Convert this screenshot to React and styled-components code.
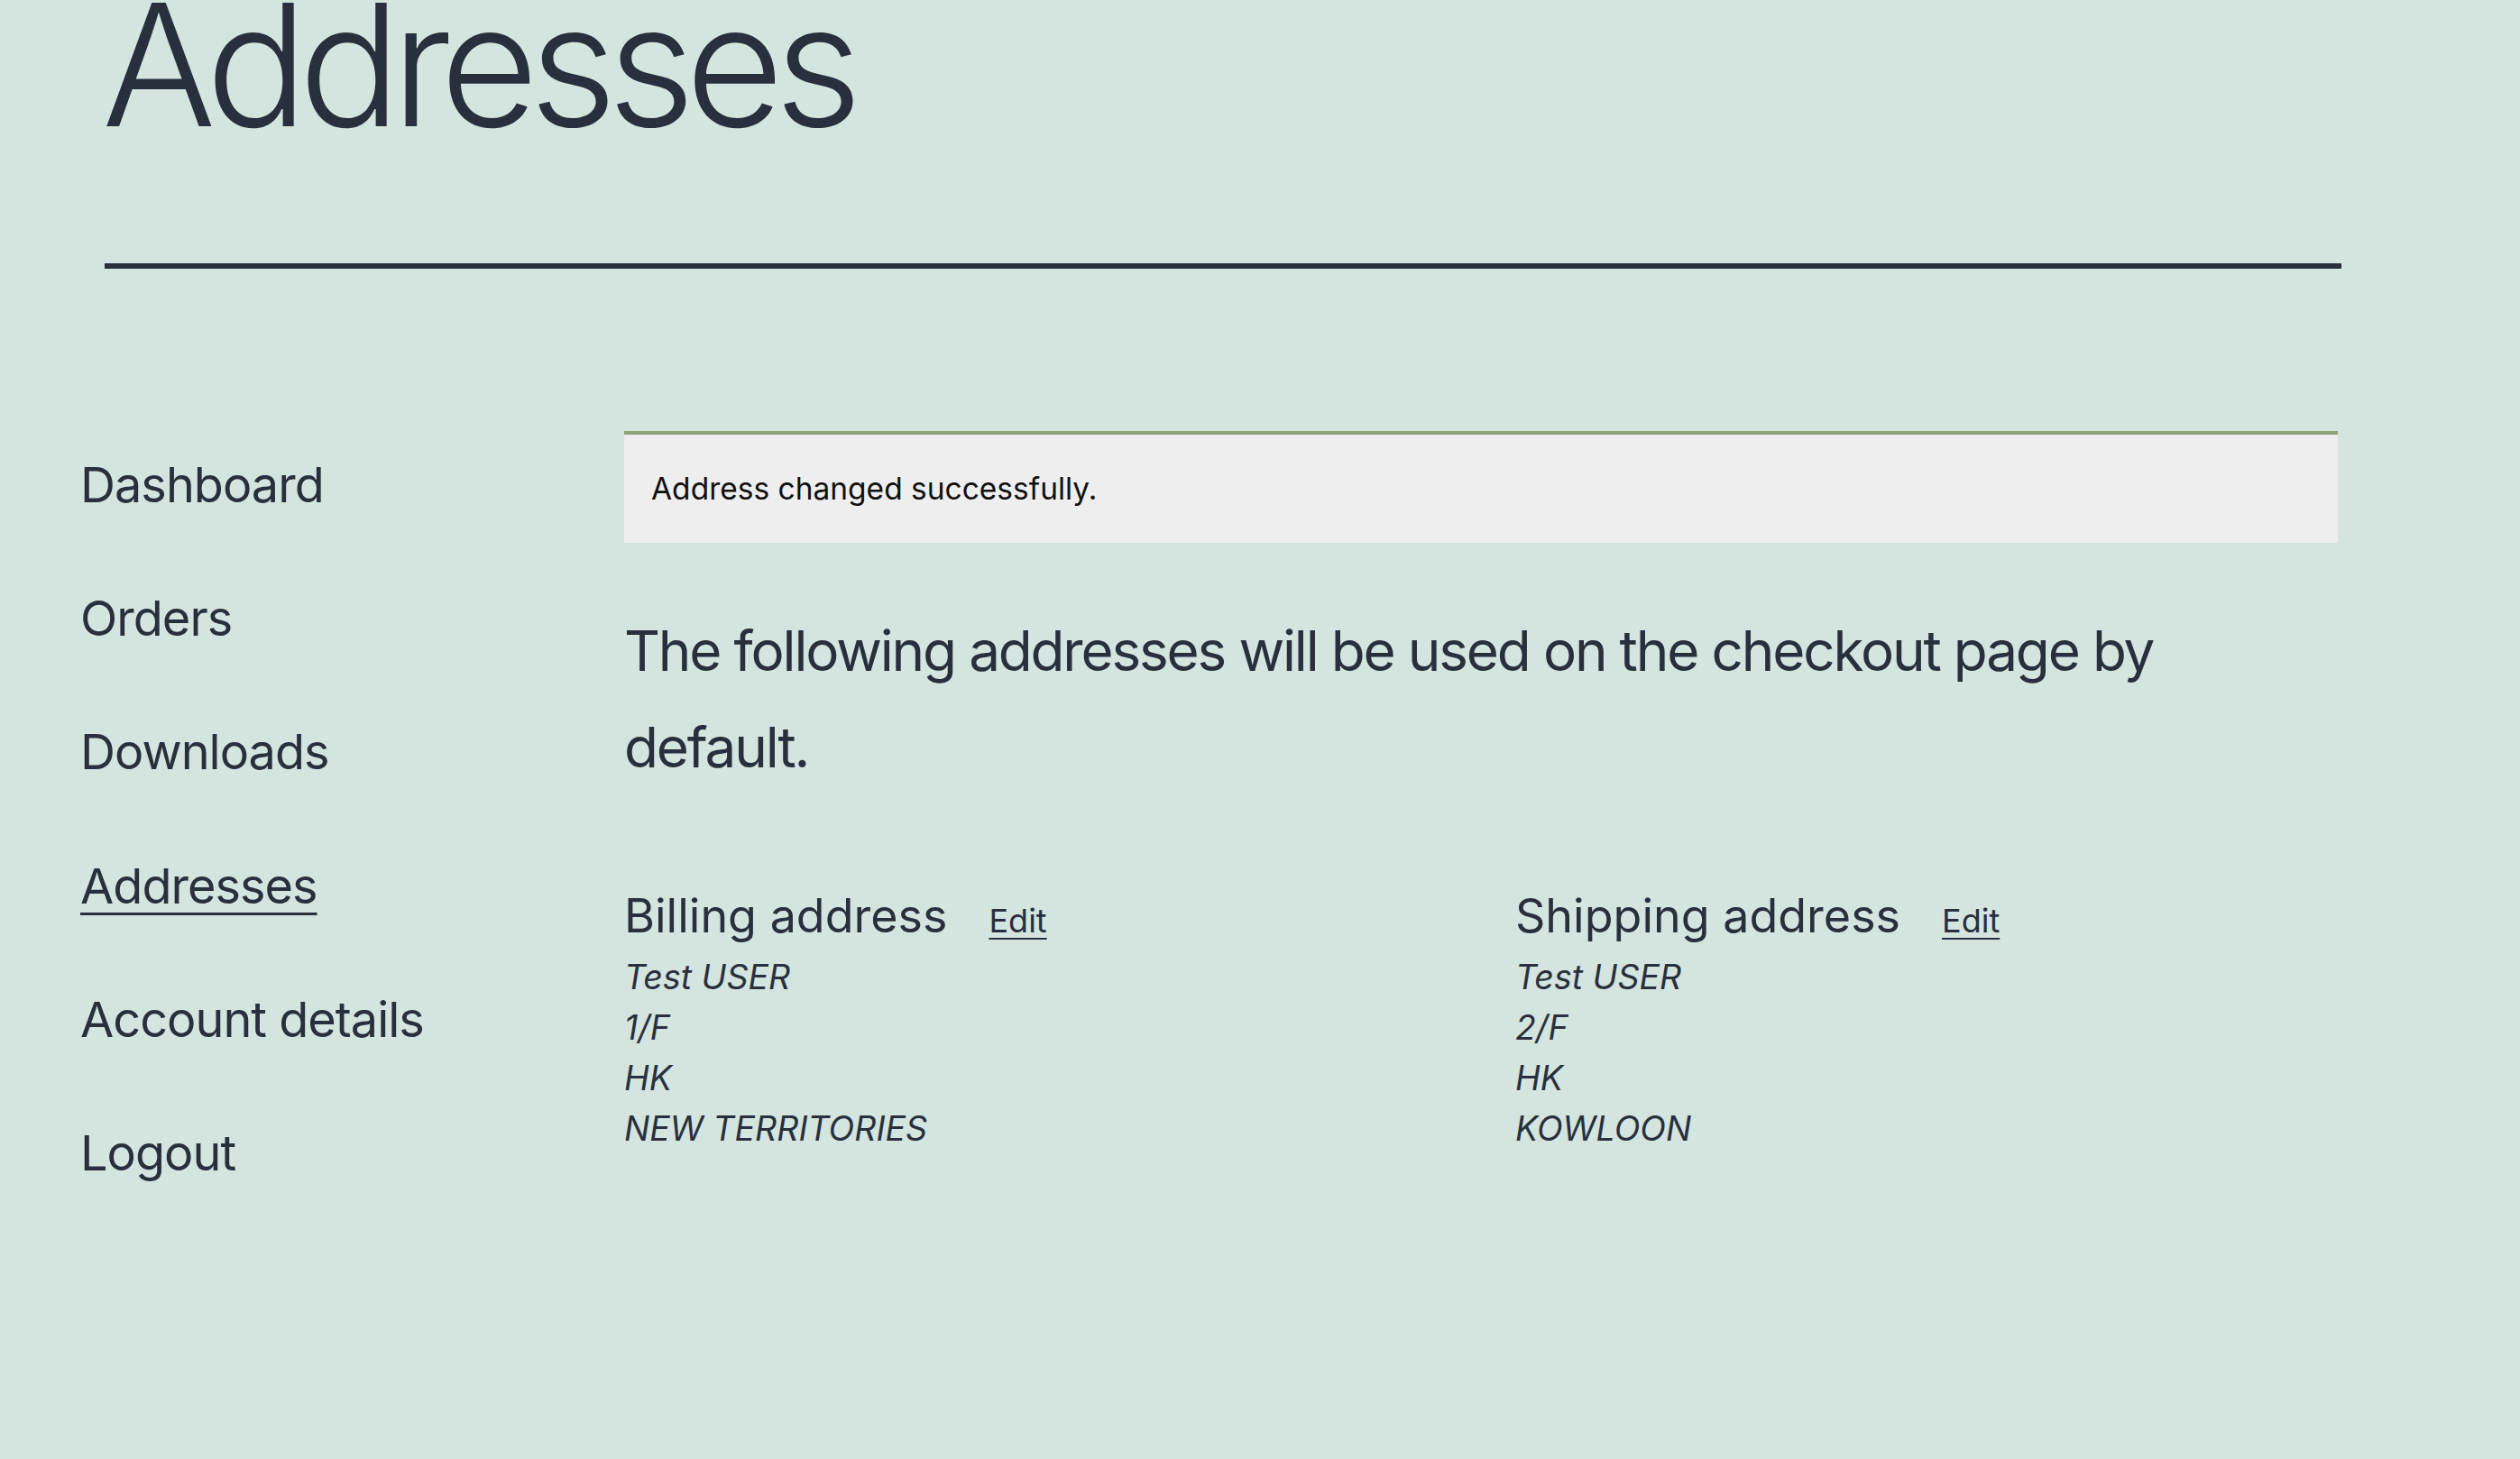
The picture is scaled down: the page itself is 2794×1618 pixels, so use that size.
import styled, { createGlobalStyle } from "styled-components";

const GlobalStyle = createGlobalStyle`
  html, body {
    margin: 0;
    padding: 0;
    background: #d4e4de;
  }
  body {
    font-family: "Inter", "Noto Sans", sans-serif;
    color: #28303d;
    overflow: hidden;
  }
`;

const Page = styled.div`
  min-height: 1618px;
  background: #d4e4de;
`;

const Header = styled.header`
  margin: -22px 198px 0 116px;
  padding-bottom: 126px;
  border-bottom: 6px solid #28303d;
`;

const Title = styled.h1`
  margin: 0 0 0 -3px;
  font-size: 188px;
  line-height: 1;
  font-weight: 300;
  letter-spacing: -0.055em;
`;

const Body = styled.div`
  display: grid;
  grid-template-columns: 603px 1900px;
  padding: 180px 0 0 89px;
`;

const Nav = styled.nav`
  display: flex;
  flex-direction: column;
  gap: 78px;
  padding-top: 25px;
`;

const NavItem = styled.a`
  font-size: 54px;
  line-height: 1.3;
  letter-spacing: -0.018em;
  color: #28303d;
  text-decoration: ${(p) => (p.$active ? "underline" : "none")};
  text-decoration-thickness: 3px;
  text-underline-offset: 10px;
`;

const Content = styled.div`
  display: flex;
  flex-direction: column;
`;

const Notice = styled.div`
  background: #eeeeee;
  border-top: 4px solid #8fa177;
  padding: 36px 30px;
  font-size: 33.5px;
  line-height: 48px;
  color: #111111;
`;

const Lead = styled.p`
  margin: 66px 0 0;
  font-size: 62px;
  line-height: 107px;
  letter-spacing: -0.035em;
`;

const Columns = styled.div`
  display: grid;
  grid-template-columns: 1fr 1fr;
  column-gap: 76px;
  margin-top: 100px;
`;

const TitleRow = styled.div`
  display: flex;
  align-items: baseline;
  gap: 46px;
`;

const ColTitle = styled.h2`
  margin: 0;
  font-size: 52px;
  line-height: 1.3;
  font-weight: 400;
`;

const EditLink = styled.a`
  font-size: 36px;
  color: #28303d;
  text-decoration: underline;
  text-decoration-thickness: 2px;
  text-underline-offset: 6px;
`;

const Address = styled.address`
  margin-top: 6px;
  font-size: 37.5px;
  line-height: 56px;
  font-style: italic;
`;

const navItems = ["Dashboard", "Orders", "Downloads", "Addresses", "Account details", "Logout"];

const addresses = [
  { title: "Billing address", lines: ["Test USER", "1/F", "HK", "NEW TERRITORIES"] },
  { title: "Shipping address", lines: ["Test USER", "2/F", "HK", "KOWLOON"] },
];

export default function App() {
  return (
    <Page>
      <GlobalStyle />
      <Header>
        <Title>Addresses</Title>
      </Header>
      <Body>
        <Nav>
          {navItems.map((item) => (
            <NavItem key={item} href="#" $active={item === "Addresses"}>
              {item}
            </NavItem>
          ))}
        </Nav>
        <Content>
          <Notice>Address changed successfully.</Notice>
          <Lead>The following addresses will be used on the checkout page by default.</Lead>
          <Columns>
            {addresses.map((a) => (
              <div key={a.title}>
                <TitleRow>
                  <ColTitle>{a.title}</ColTitle>
                  <EditLink href="#">Edit</EditLink>
                </TitleRow>
                <Address>
                  {a.lines.map((l, i) => (
                    <span key={i}>
                      {l}
                      <br />
                    </span>
                  ))}
                </Address>
              </div>
            ))}
          </Columns>
        </Content>
      </Body>
    </Page>
  );
}
